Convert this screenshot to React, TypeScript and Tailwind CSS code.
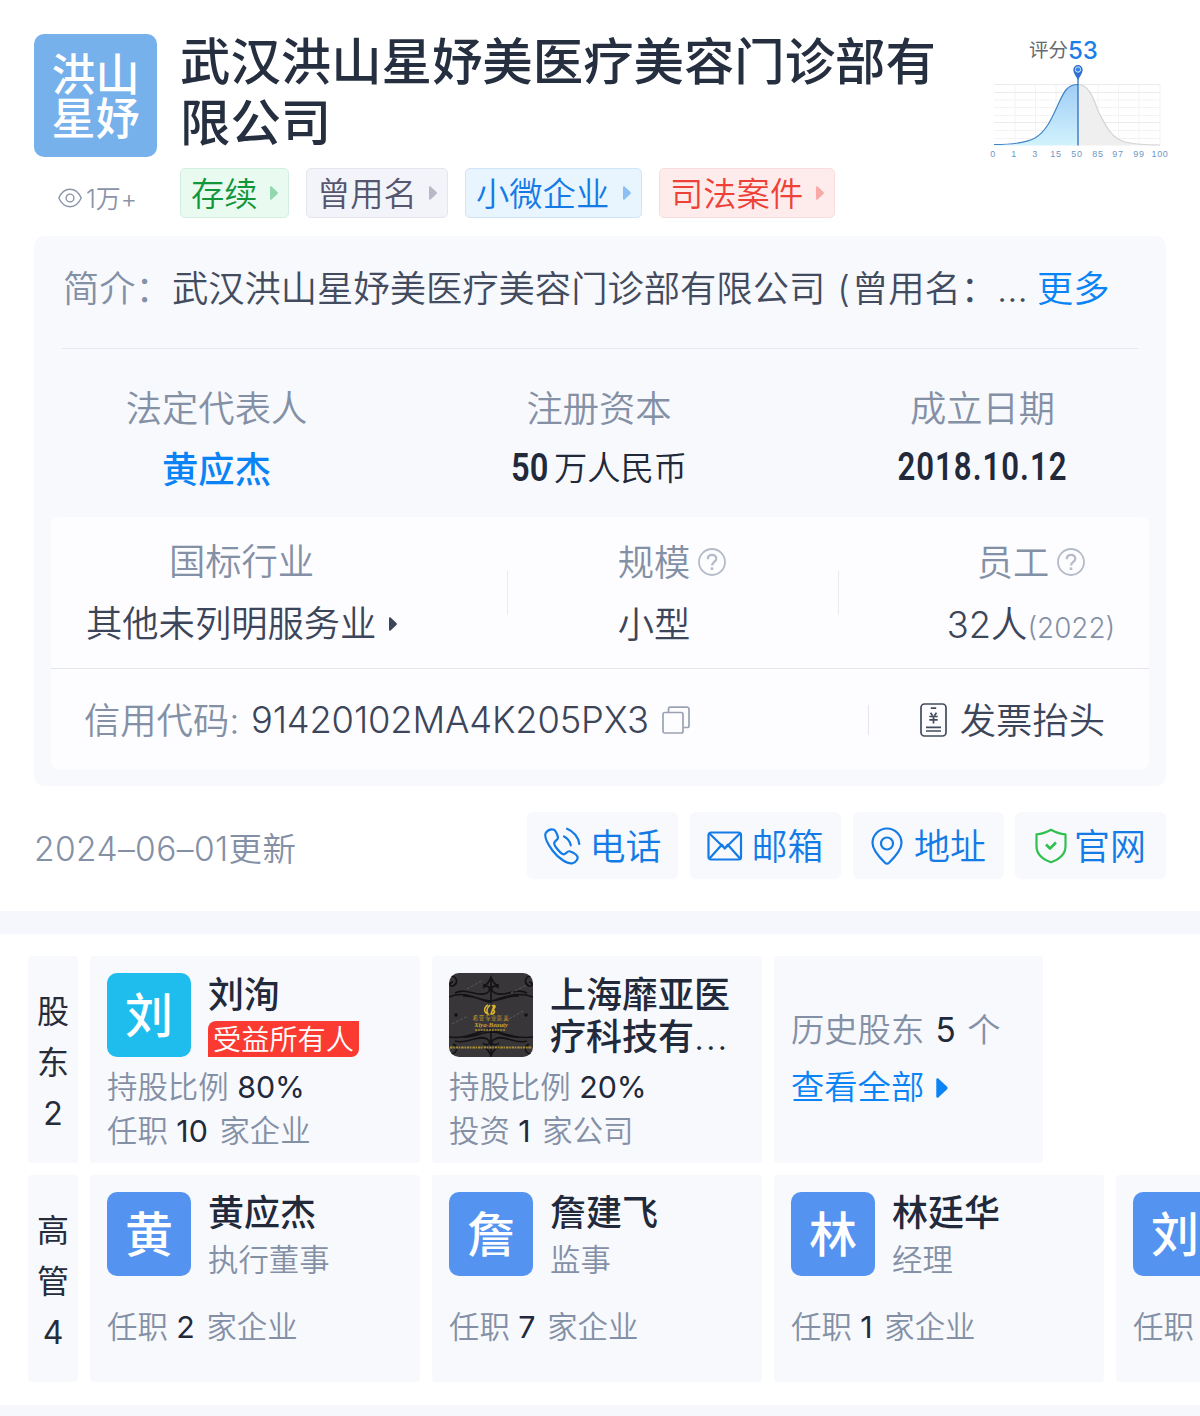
import React from 'react';

const tags = [
  { text: '存续', box: 'w-[109px] bg-[#e9fbf0] border-[#d3efdf] text-[#12963c]', arrow: 'text-[#93d8ad]' },
  { text: '曾用名', box: 'w-[142px] bg-[#f3f4fa] border-[#e4e6ee] text-[#56566f]', arrow: 'text-[#b8b8c6]' },
  { text: '小微企业', box: 'w-[177px] bg-[#e8f4fe] border-[#d0e5f7] text-[#147be6]', arrow: 'text-[#8cc0f2]' },
  { text: '司法案件', box: 'w-[176px] bg-[#feecec] border-[#f9dcdc] text-[#ee4238]', arrow: 'text-[#f7aaa6]' },
];

const managers = [
  { name: '黄应杰', role: '执行董事', count: 2 },
  { name: '詹建飞', role: '监事', count: 7 },
  { name: '林廷华', role: '经理', count: 1 },
  { name: '刘洵', role: '监事', count: 10 },
];

const axisLabels = [
  { x: 3, text: '0' },
  { x: 24, text: '1' },
  { x: 45, text: '3' },
  { x: 66, text: '15' },
  { x: 87, text: '50' },
  { x: 108, text: '85' },
  { x: 128, text: '97' },
  { x: 149, text: '99' },
  { x: 170, text: '100' },
];

const Arrow = ({ className }: { className: string }) => (
  <svg viewBox="0 0 8 14" className={`shrink-0 ${className}`} fill="currentColor">
    <path d="M0 1.2C0 .2.9-.2 1.6.5L7.4 6c.7.6.7 1.4 0 2L1.6 13.5C.9 14.2 0 13.8 0 12.8Z" />
  </svg>
);

const EyeIcon = () => (
  <svg viewBox="0 0 24 20" className="w-6 h-5" fill="none" stroke="#8a93a8" strokeWidth="1.4">
    <path d="M.8 10C3.5 4 7.5 1.3 12 1.3S20.5 4 23.2 10C20.5 16 16.5 18.7 12 18.7S3.5 16 .8 10Z" />
    <circle cx="12" cy="10" r="3.9" />
  </svg>
);

const HelpIcon = () => (
  <svg viewBox="0 0 28 28" className="w-7 h-7 -mt-0.5" fill="none" stroke="#b4bbc9" strokeWidth="1.8">
    <circle cx="14" cy="14" r="13" />
    <path d="M9.8 11.2C9.8 8.3 11.6 6.8 14 6.8S18.3 8.4 18.3 10.7C18.3 13.8 14 13.9 14 17.4" strokeWidth="2.3" />
    <path d="M14 19.4V22" strokeWidth="2.6" />
  </svg>
);

const CopyIcon = () => (
  <svg viewBox="0 0 28 28" className="w-7 h-7" fill="none" stroke="#9aa2b3" strokeWidth="1.7">
    <rect x="1" y="6.5" width="20" height="20.5" rx="1.8" />
    <path d="M6.5 6.5V3A1.8 1.8 0 0 1 8.3 1.2H25.2A1.8 1.8 0 0 1 27 3V19.7A1.8 1.8 0 0 1 25.2 21.5H21" />
  </svg>
);

const InvoiceIcon = () => (
  <svg viewBox="0 0 28 34" className="w-7 h-[34px]" fill="none" stroke="#434b5e" strokeWidth="1.7">
    <rect x="1" y="1" width="25" height="32" rx="3.5" />
    <path d="M10.8 5.2H16.2M10.5 9.8L12.5 12.5M16.5 9.8L14.5 12.5M9.3 13.5H17.7M9.3 16.8H17.7M13.5 12.5V20.5M6 24.3H21M6 28H21" />
  </svg>
);

const PhoneIcon = () => (
  <svg viewBox="0 0 38 38" className="w-[38px] h-[38px]" fill="none" stroke="#147be6" strokeWidth="2.2" strokeLinecap="round" strokeLinejoin="round">
    <path d="M3 5.5C5 3.2 8.5 2 11 2.8C12.5 3.5 14.5 7.5 15 10.5C15.3 12.5 11.5 14 11.2 16C11 18.5 17 26.5 20.5 27.3C22.5 27.6 24.3 23.8 26.5 24.3C29.5 25.2 33.5 28 34.5 29.7C35.3 32 32.5 35.5 29.5 36.3C24.5 37.3 15.5 31.5 9.5 23.5C4 16 .5 9.5 3 5.5Z" />
    <path d="M21 9.5C24.5 11.3 27 14.5 27.8 18.3M24 1.8C30.5 4.3 35.5 10.2 36.3 17" />
  </svg>
);

const MailIcon = () => (
  <svg viewBox="0 0 36 30" className="w-9 h-[30px]" fill="none" stroke="#147be6" strokeWidth="2.2" strokeLinejoin="round">
    <rect x="1.5" y="1.5" width="32.5" height="27" rx="2.5" />
    <path d="M2.5 2.5L17.8 17.5L33 2.5M2.5 27.5L14.8 13.7L17.8 17.5L20.8 13.7L33 27.5" />
  </svg>
);

const PinIcon = () => (
  <svg viewBox="0 0 32 38" className="w-8 h-[38px]" fill="none" stroke="#147be6" strokeWidth="2.2" strokeLinejoin="round">
    <path d="M16 1.5C8 1.5 1.5 8 1.5 16C1.5 23 8 30 14 35.7Q16 37.5 18 35.7C24 30 30.5 23 30.5 16C30.5 8 24 1.5 16 1.5Z" />
    <circle cx="16" cy="16.5" r="6" />
  </svg>
);

const ShieldIcon = () => (
  <svg viewBox="0 0 32 36" className="w-8 h-9" fill="none" stroke="#2fc04f" strokeWidth="2.2" strokeLinejoin="round">
    <path d="M16 1.8C20.5 4.5 25 6 30.5 6.3V18C30.5 26 24 31.5 16 34.2C8 31.5 1.5 26 1.5 18V6.3C7 6 11.5 4.5 16 1.8Z" />
    <path d="M11 16.5L15 20.5L21 14.5" strokeWidth="2.6" />
  </svg>
);

const contacts = [
  { text: '电话', icon: <PhoneIcon />, gap: 'gap-[8px]' },
  { text: '邮箱', icon: <MailIcon />, gap: 'gap-[8px]' },
  { text: '地址', icon: <PinIcon />, gap: 'gap-[11px]' },
  { text: '官网', icon: <ShieldIcon />, gap: 'gap-[7px] -ml-px' },
];

const ScoreChart = () => (
  <svg viewBox="0 0 180 98" className="w-[180px] h-[98px]" fill="none">
    <defs>
      <linearGradient id="score" x1="0" y1="0" x2="0" y2="1">
        <stop offset="0" stopColor="#9fcdf5" />
        <stop offset="1" stopColor="#d2f3fd" />
      </linearGradient>
    </defs>
    <path d="M4 36H170M4 43.5H170M4 51.5H170M4 66.5H170M4 74.5H170M25 20V81M45.5 20V81M66 20V81M108 20V81M128.5 20V81M149 20V81M170 20V81" stroke="#f3f3f5" />
    <path d="M4 20.5H170M4 28.5H170M4 58.5H170" stroke="#ebebee" />
    <path d="M4 80.5C20 80.5 35 79.5 45 74C56 67.5 62 54 67 43C73 30 76 20.5 88 20.5V81.5H4Z" fill="url(#score)" />
    <path d="M88 20.5C100 20.5 104 37 109 49C116 62 121 74 135 78C145 80.5 155 81 170 81V81.5H88Z" fill="#efefef" />
    <path d="M88 20.5C100 20.5 104 37 109 49C116 62 121 74 135 78C145 80.5 155 81 170 81" stroke="#d4d4d6" strokeWidth="1.2" />
    <path d="M4 80.5C20 80.5 35 79.5 45 74C56 67.5 62 54 67 43C73 30 76 20.5 88 20.5" stroke="#4183c6" strokeWidth="1.2" />
    <path d="M88 12V81.5" stroke="#2c6fc0" strokeWidth="1.3" />
    <path d="M88 16C86 12 83.3 9 83.3 5.7A4.7 4.7 0 0 1 92.7 5.7C92.7 9 90 12 88 16Z" fill="#2f6fd0" />
    <circle cx="88" cy="5.5" r="2.7" fill="#2f86ea" stroke="#cfe6ff" strokeWidth="1" />
    {axisLabels.map((label) => (
      <text key={label.text} x={label.x} y="93" fill="#6f97c4" fontSize="9" letterSpacing="0.7" textAnchor="middle" fontFamily="Liberation Sans, sans-serif">
        {label.text}
      </text>
    ))}
  </svg>
);

// Brand picture of the company shareholder
const BrandLogo = () => (
  <svg viewBox="0 0 84 84" className="w-[84px] h-[84px] rounded-[10px] shrink-0" fill="none">
    <rect width="84" height="84" fill="#39363a" />
    <g stroke="#131214" strokeWidth="1.6">
      <path d="M0 24C14 18 24 24 40 29C56 24 68 18 84 24M6 20C18 14 28 25 38 20C44 16 38 10 34 15M78 20C66 14 56 25 46 20C38 16 46 10 50 15M14 23C26 22 32 28 42 28C52 28 58 22 70 23M42 5V30M34 12C38 13 40 9 42 4C44 9 46 13 50 12" />
      <path d="M0 64C14 66 24 61 40 56C56 61 68 66 84 64M6 68C18 72 28 61 38 66C44 70 38 74 34 70M78 68C66 72 56 61 46 66C38 70 46 74 50 70M14 64C26 65 32 59 42 59C52 59 58 65 70 64M42 56V82M34 75C38 74 40 78 42 83C44 78 46 74 50 75" />
      <path d="M1 3C8 3 10 10 4 13C0 14 0 9 4 9M83 3C76 3 74 10 80 13C84 14 84 9 80 9M1 81C8 81 10 74 4 71M83 81C76 81 74 74 80 71" />
    </g>
    <circle cx="7" cy="42" r="1.8" fill="#131214" />
    <circle cx="77" cy="42" r="1.8" fill="#131214" />
    <g stroke="#5b585c" strokeWidth="1">
      <path d="M18 16L34 7M3 51L19 43M62 20L78 12M60 46L74 38" strokeDasharray="3 1.5" />
    </g>
    <path d="M39 32C34 35 35 40 39 41C37 38 38 35 41 32M43 33C47 31 47 35 43 37C47 37 46 41 42 41L45 33" stroke="#d9b62c" strokeWidth="1.5" />
    <g fill="#c9a62c" textAnchor="middle">
      <text x="42" y="47" fontSize="5.5" letterSpacing="0.6" fontFamily="Noto Sans CJK SC, sans-serif">希亚专业医美</text>
      <text x="42" y="53.5" fontSize="6.6" fontWeight="700" fontStyle="italic" fontFamily="Liberation Serif, serif">Xiya-Beauty</text>
    </g>
    <path d="M26 57H57" stroke="#8d7730" strokeWidth="2" strokeDasharray="2 .8" />
    <path d="M1 74.5H83" stroke="#a88f35" strokeWidth="1.8" strokeDasharray="2.5 .7 1.5 .9" />
  </svg>
);

const Avatar = ({ text, color }: { text: string; color: string }) => (
  <div className={`w-[84px] h-[84px] pt-[2px] rounded-[10px] shrink-0 flex items-center justify-center text-white text-[48px] leading-none font-medium ${color}`}>
    {text}
  </div>
);

const Stat = ({ label, value, unit }: { label: string; value: string | number; unit?: string }) => (
  <p className="text-[30.4px] leading-[44px] text-[#8490a5] whitespace-pre">
    {label} <span className="mr-[3px] font-normal text-[#22293a]">{value}</span> {unit}
  </p>
);

const SideLabel = ({ chars }: { chars: string[] }) => (
  <div className="w-[50px] shrink-0 rounded bg-[#f7f9fd] pt-[30px] flex flex-col items-center text-[32px] leading-[51px] font-normal text-[#262c3a]">
    {chars.map((c) => (
      <span key={c}>{c}</span>
    ))}
  </div>
);

const App = () => {
  return (
    <div className="w-[1200px] h-[1416px] overflow-hidden bg-white font-['Inter','Noto_Sans_CJK_SC',sans-serif] font-[350]">
      {/* Header */}
      <header className="flex h-[236px] pl-[34px] pt-[30px]">
        <div className="w-[123px] shrink-0">
          <div className="mt-1 w-[123px] h-[123px] pt-0.5 rounded-[10px] bg-[#76b1ec] flex flex-col items-center justify-center text-white text-[44px] leading-[44px] font-medium">
            <span>洪山</span>
            <span>星妤</span>
          </div>
          <div className="mt-[25px] pl-6 flex items-center gap-1 text-[25px] leading-[30px] text-[#8a93a8]">
            <EyeIcon />
            <span className="mt-0.5">1万+</span>
          </div>
        </div>
        <div className="ml-[22px] w-[780px] shrink-0 pt-px">
          <h1 className="ml-px text-[50.4px] leading-[61px] font-medium text-[#262f40]">
            武汉洪山星妤美医疗美容门诊部有限公司
          </h1>
          <div className="mt-[15px] ml-px flex gap-[17px]">
            {tags.map((tag) => (
              <div key={tag.text} className={`h-[50px] rounded-[5px] border flex items-center justify-between pl-2.5 pr-2.5 text-[33.3px] leading-none ${tag.box}`}>
                <span className="mt-1">{tag.text}</span>
                <Arrow className={`w-2 h-[14px] ${tag.arrow}`} />
              </div>
            ))}
          </div>
        </div>
        <div className="ml-[31px] w-[180px] shrink-0">
          <div className="h-[34px] pl-[39px] pt-[7px] flex items-center text-[19.5px] text-[#666a70] font-normal">
            评分<span className="text-[24px] font-medium text-[#1c7ee6]">53</span>
          </div>
          <ScoreChart />
        </div>
      </header>

      {/* Company info */}
      <section className="mx-[34px] h-[550px] rounded-[10px] bg-[#f7f9fd] text-[36.3px] leading-[60px]">
        <div className="mx-7 h-[113px] pt-[23px] pl-px border-b border-[#e5e8ee] flex text-[#434b5e] whitespace-nowrap">
          <span className="text-[#8490a5]">简介：</span>
          武汉洪山星妤美医疗美容门诊部有限公司
          <span className="ml-3 mr-0.5">(</span>
          曾用名：
          <span className="w-[40px]">...</span>
          <a className="text-[#0a84f5]">更多</a>
        </div>
        <div className="flex h-[168px] pt-[30px] text-center">
          <div className="w-[365px]">
            <p className="text-[#8490a5]">法定代表人</p>
            <p className="pt-px font-medium text-[#0a84f5]">黄应杰</p>
          </div>
          <div className="w-[400px]">
            <p className="text-[#8490a5]">注册资本</p>
            <p className="-mt-px flex justify-center text-[33.3px] text-[#22293a]">
              <span className="w-[37px] mr-1.5 flex justify-center"><span className="inline-block scale-x-[0.86] font-['Roboto'] text-[38px] font-semibold">50</span></span>
              万人民币
            </p>
          </div>
          <div className="w-[367px]">
            <p className="text-[#8490a5]">成立日期</p>
            <p className="-mt-0.5 scale-x-[0.82] font-['Roboto'] text-[38px] tracking-[1.2px] font-semibold text-[#22293a]">2018.10.12</p>
          </div>
        </div>

        <div className="mx-[17px] h-[253px] rounded-lg bg-[#fdfdff]">
          <div className="h-[152px] flex items-center border-b border-[#e3e6ea] leading-[62px]">
            <div className="w-[456px] pl-[35px] pt-px">
              <div className="w-[311px]">
                <p className="text-center text-[#8490a5]">国标行业</p>
                <p className="flex items-center justify-between text-[#3c4559]">
                  其他未列明服务业
                  <Arrow className="w-2 h-[14px]" />
                </p>
              </div>
            </div>
            <div className="w-px h-[44px] bg-[#e9ebf0]"></div>
            <div className="w-[330px] pr-0.5 pt-[3px] flex justify-center">
              <div>
                <p className="flex items-center gap-2 text-[#8490a5]">规模<HelpIcon /></p>
                <p className="text-[#3c4559]">小型</p>
              </div>
            </div>
            <div className="w-px h-[44px] bg-[#e9ebf0]"></div>
            <div className="flex-1 pl-[74px] pt-[3px] flex flex-col items-center">
              <p className="flex items-center gap-2 text-[#8490a5]">员工<HelpIcon /></p>
              <p className="h-[62px] text-[#3c4559]">32人<span className="text-[27.8px] leading-none text-[#8490a5]">(2022)</span></p>
            </div>
          </div>
          <div className="h-[101px] pl-[33px] pr-[44px] flex items-center text-[#3c4559]">
            <span className="mt-0.5 w-[167px] text-[#8490a5]">信用代码:</span>
            <span className="w-[411px] text-[36.3px] tracking-[-0.15px]">91420102MA4K205PX3</span>
            <CopyIcon />
            <div className="ml-auto mr-[51px] w-px h-[30px] bg-[#e3e6ec]"></div>
            <InvoiceIcon />
            <span className="mt-[3px] ml-3">发票抬头</span>
          </div>
        </div>
      </section>

      {/* Contacts */}
      <div className="mt-[26px] h-[67px] px-[34px] flex items-center gap-3 text-[36px] leading-none text-[#147be6]">
        <span className="flex-1 mt-2 text-[33.5px] tracking-[0.4px] text-[#8490a5]">2024–06–01更新</span>
        {contacts.map((c) => (
          <a key={c.text} className={`w-[151px] h-[67px] rounded-md bg-[#f7f9fd] flex items-center justify-center ${c.gap}`}>
            {c.icon}
            <span className="mt-[3px]">{c.text}</span>
          </a>
        ))}
      </div>

      <div className="mt-8 h-[23px] bg-[#f6f7fc]"></div>

      {/* Shareholders */}
      <div className="mt-[22px] pl-7 flex gap-3 h-[207px]">
        <SideLabel chars={['股', '东', '2']} />
        <div className="w-[330px] rounded bg-[#f7f9fd] p-[17px]">
          <div className="flex gap-[17px] h-[92px]">
            <Avatar text="刘" color="bg-[#1fbcee]" />
            <div className="pt-px">
              <p className="text-[36px] leading-[42px] font-medium text-[#22293a]">刘洵</p>
              <span className="mt-[5px] w-[151px] h-9 pt-[3px] rounded-tl-lg rounded-br-lg bg-[#fb3a31] flex items-center justify-center text-[28.2px] leading-none text-white">受益所有人</span>
            </div>
          </div>
          <Stat label="持股比例" value="80%" />
          <Stat label="任职" value={10} unit="家企业" />
        </div>
        <div className="w-[330px] rounded bg-[#f7f9fd] p-[17px]">
          <div className="flex gap-[17px] h-[92px]">
            <BrandLogo />
            <p className="w-[190px] pt-px text-[36px] leading-[42px] font-medium text-[#22293a]">上海靡亚医疗科技有<span className="font-light tracking-[1.5px]">...</span></p>
          </div>
          <Stat label="持股比例" value="20%" />
          <Stat label="投资" value={1} unit="家公司" />
        </div>
        <div className="w-[269px] rounded bg-[#f7f9fd] pl-[17px] pt-[46px] text-[33.3px] leading-[57px]">
          <p className="text-[#8490a5] whitespace-pre [word-spacing:2px]">历史股东 <span className="font-normal text-[#22293a]">5</span> 个</p>
          <p className="flex items-center gap-3 text-[#0a84f5]">
            查看全部
            <Arrow className="w-3 h-5" />
          </p>
        </div>
      </div>

      {/* Executives */}
      <div className="mt-3 pl-7 flex gap-3 h-[207px]">
        <SideLabel chars={['高', '管', '4']} />
        {managers.map((m) => (
          <div key={m.name} className="w-[330px] shrink-0 rounded bg-[#f7f9fd] p-[17px]">
            <div className="flex gap-[17px] h-[113px]">
              <Avatar text={m.name[0]} color="bg-[#5593f0]" />
              <div>
                <p className="text-[36px] leading-[42px] font-medium text-[#22293a]">{m.name}</p>
                <p className="mt-1 text-[30.4px] leading-[44px] text-[#8490a5]">{m.role}</p>
              </div>
            </div>
            <Stat label="任职" value={m.count} unit="家企业" />
          </div>
        ))}
      </div>

      <div className="mt-[23px] h-3 bg-[#f6f7fc]"></div>
    </div>
  );
};

export default App;
